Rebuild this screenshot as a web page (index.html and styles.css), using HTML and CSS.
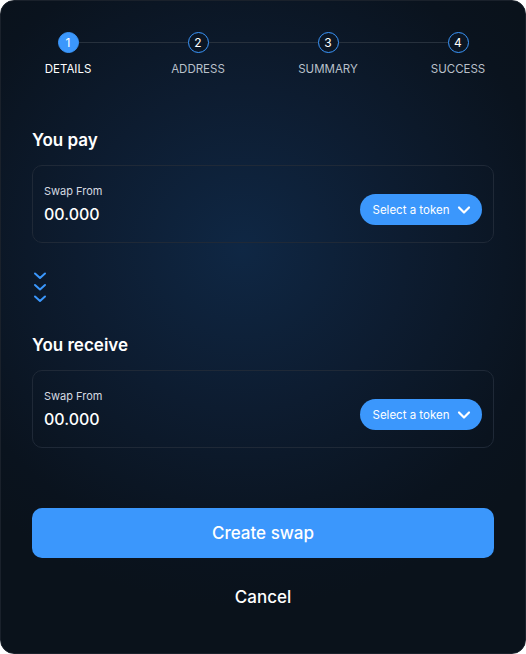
FILE: index.html
```html
<!DOCTYPE html>
<html lang="en">
<head>
<meta charset="utf-8">
<title>Create swap</title>
<link rel="stylesheet" href="styles.css">
</head>
<body>
<main class="card">
  <ol class="stepper">
    <li class="step active"><span class="dot">1</span><span class="label">DETAILS</span></li>
    <li class="step"><span class="dot">2</span><span class="label">ADDRESS</span></li>
    <li class="step"><span class="dot">3</span><span class="label">SUMMARY</span></li>
    <li class="step"><span class="dot">4</span><span class="label">SUCCESS</span></li>
  </ol>

  <h2 class="section-title pay-title">You pay</h2>
  <div class="field">
    <div class="field-text">
      <span class="field-label">Swap From</span>
      <span class="field-value">00.000</span>
    </div>
    <button class="token-btn" type="button">Select a token
      <svg class="chev" width="14" height="14" viewBox="0 0 14 14"><path d="M2 4.5 L7 9.5 L12 4.5" fill="none" stroke="#fff" stroke-width="2.2" stroke-linecap="round" stroke-linejoin="round"/></svg>
    </button>
  </div>

  <div class="arrows">
    <svg width="14" height="36" viewBox="0 0 14 36"><g fill="none" stroke="#3b97fc" stroke-width="2" stroke-linecap="round" stroke-linejoin="round"><path d="M2 2.5 L7 7 L12 2.5"/><path d="M2 14 L7 18.5 L12 14"/><path d="M2 25.5 L7 30 L12 25.5"/></g></svg>
  </div>

  <h2 class="section-title receive-title">You receive</h2>
  <div class="field">
    <div class="field-text">
      <span class="field-label">Swap From</span>
      <span class="field-value">00.000</span>
    </div>
    <button class="token-btn" type="button">Select a token
      <svg class="chev" width="14" height="14" viewBox="0 0 14 14"><path d="M2 4.5 L7 9.5 L12 4.5" fill="none" stroke="#fff" stroke-width="2.2" stroke-linecap="round" stroke-linejoin="round"/></svg>
    </button>
  </div>

  <button class="primary" type="button">Create swap</button>
  <button class="cancel" type="button">Cancel</button>
</main>
</body>
</html>
```

FILE: styles.css
```css
* { box-sizing: border-box; }
html, body { margin: 0; padding: 0; background: #ffffff; }
body { font-family: "Inter", "Lato", sans-serif; color: #ffffff; }

.card {
  width: 526px;
  height: 654px;
  border-radius: 14px;
  border: 1px solid #1a212b;
  background: radial-gradient(ellipse 70% 55% at 46% 38%, #0f2744 0%, #0d1c30 45%, #0a131e 85%, #0a121b 100%);
  padding: 31px 31px 0;
  display: flex;
  flex-direction: column;
  overflow: hidden;
}

.stepper {
  list-style: none;
  margin: 0 -29px;
  padding: 0;
  display: grid;
  grid-template-columns: repeat(4, 1fr);
}
.step {
  position: relative;
  display: flex;
  flex-direction: column;
  align-items: center;
  gap: 9px;
}
.step + .step::before {
  content: "";
  position: absolute;
  top: 10px;
  left: -50%;
  width: 100%;
  height: 1px;
  background: #27313d;
}
.dot {
  position: relative;
  z-index: 1;
  width: 21px;
  height: 21px;
  border-radius: 50%;
  border: 1.5px solid #3b97fc;
  background: #0b1624;
  display: flex;
  align-items: center;
  justify-content: center;
  font-size: 12px;
  font-weight: 400;
  color: #ffffff;
}
.step.active .dot { background: #3b97fc; }
.label {
  font-size: 11.5px;
  line-height: 14px;
  color: #b9c0ca;
}
.step.active .label { color: #ffffff; }

.section-title {
  margin: 0;
  font-size: 17px;
  line-height: 20px;
  font-weight: 600;
}
.pay-title { margin-top: 54px; }
.receive-title { margin-top: 28px; }

.field {
  margin-top: 15px;
  height: 78px;
  border: 1px solid #1f2937;
  border-radius: 10px;
  display: flex;
  align-items: center;
  justify-content: space-between;
  padding: 0 11px 0 11px;
}
.field-text { display: flex; flex-direction: column; gap: 7px; padding-bottom: 1px; }
.field-label { font-size: 11px; line-height: 13px; color: #d5dae1; }
.field-value { font-size: 16px; line-height: 18px; font-weight: 500; color: #ffffff; }

.token-btn {
  margin-top: 11px;
  height: 31px;
  width: 122px;
  border: 0;
  border-radius: 16px;
  background: #3b97fc;
  color: #ffffff;
  font-family: inherit;
  font-size: 11.5px;
  display: flex;
  align-items: center;
  justify-content: center;
  gap: 8px;
  padding: 0 0 0 2px;
}
.chev { display: block; }

.arrows { margin-top: 28px; height: 36px; padding-left: 1px; }
.arrows svg { display: block; }

.primary {
  margin-top: 60px;
  height: 50px;
  border: 0;
  border-radius: 10px;
  background: #3b97fc;
  color: #ffffff;
  font-family: inherit;
  font-size: 17px;
  font-weight: 500;
}
.cancel {
  margin-top: 29px;
  height: 20px;
  border: 0;
  background: none;
  color: #ffffff;
  font-family: inherit;
  font-size: 17px;
  font-weight: 500;
  padding: 0;
}
```
